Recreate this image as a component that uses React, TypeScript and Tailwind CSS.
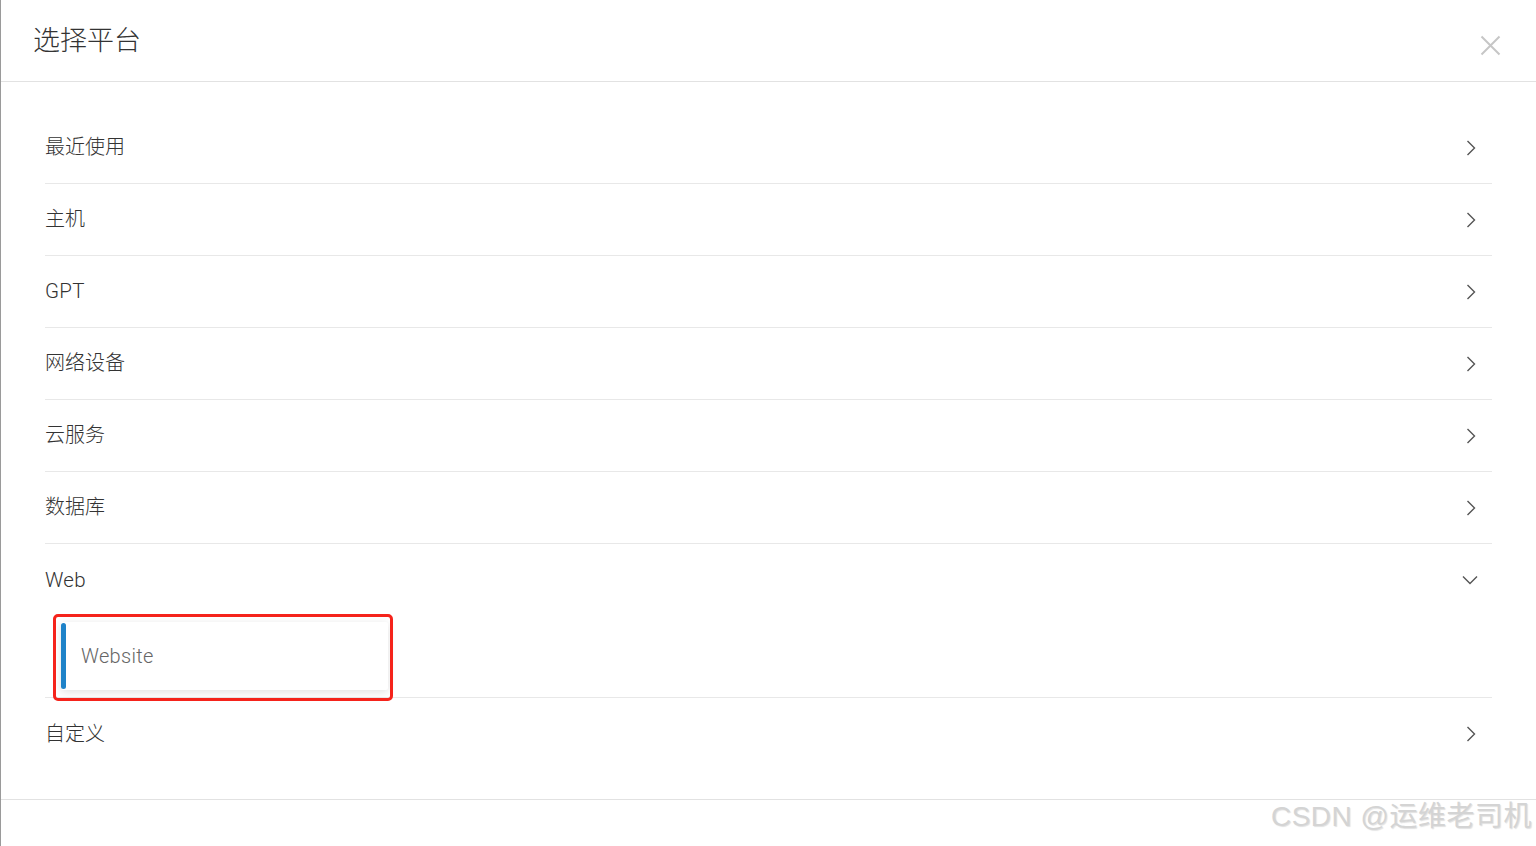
import React from "react";

const font = { fontFamily: '"Liberation Sans", "Noto Sans CJK SC", sans-serif' };
const latinFont = { fontFamily: 'Roboto, "Liberation Sans", sans-serif' };

function ChevronRight() {
  return (
    <svg width="12" height="18" viewBox="0 0 12 18" fill="none">
      <path d="M2.5 2 L9.5 9 L2.5 16" stroke="#555" strokeWidth="1.4" />
    </svg>
  );
}

function ChevronDown() {
  return (
    <svg width="18" height="12" viewBox="0 0 18 12" fill="none">
      <path d="M2 2.5 L9 9.5 L16 2.5" stroke="#555" strokeWidth="1.4" />
    </svg>
  );
}

function Row({ label, last, latin }: { label: string; last?: boolean; latin?: boolean }) {
  return (
    <div
      className={
        "h-[72px] flex items-center justify-between pr-[15px] text-[20px] text-[#333] " +
        (last ? "" : "border-b border-[#e8e8e8]")
      }
    >
      {latin ? (
        <span className="font-light text-[20.5px] tracking-[0.3px]" style={latinFont}>
          {label}
        </span>
      ) : (
        <span className="font-light -mt-[1px]">{label}</span>
      )}
      <ChevronRight />
    </div>
  );
}

export default function App() {
  return (
    <div
      className="w-[1536px] h-[846px] bg-white border-l border-[#9a9a9a] relative overflow-hidden flex flex-col"
      style={font}
    >
      <div className="h-[82px] shrink-0 border-b border-[#e2e2e2] flex justify-between">
        <div className="pl-[32px] flex items-center text-[27px] font-light text-[#333] pt-[1px]">选择平台</div>
        <div className="mt-[35px] mr-[35px]">
          <svg width="21" height="21" viewBox="0 0 21 21" fill="none">
            <path d="M1.5 1.5 L19.5 19.5 M19.5 1.5 L1.5 19.5" stroke="#c6c6c6" strokeWidth="2" />
          </svg>
        </div>
      </div>

      <div className="px-[44px] pt-[30px] pb-[29px] border-b border-[#e2e2e2]">
        <Row label="最近使用" />
        <Row label="主机" />
        <Row label="GPT" latin />
        <Row label="网络设备" />
        <Row label="云服务" />
        <Row label="数据库" />
        <div className="border-b border-[#e8e8e8]">
          <div className="h-[72px] flex items-center justify-between pr-[13px] text-[#333]">
            <span className="font-light text-[20.5px] tracking-[0.3px]" style={latinFont}>
              Web
            </span>
            <ChevronDown />
          </div>
          <div className="h-[81px] pt-[6px] pl-[16px]">
            <div className="w-[327px] h-[68px] bg-white flex items-center shadow-[0_2px_8px_rgba(0,0,0,0.12)] rounded-[2px]">
              <div className="w-[5px] h-[66px] bg-[#1f83c9] rounded-[3px]" />
              <span className="ml-[15px] text-[20px] font-light text-[#666] tracking-[0.3px]" style={latinFont}>
                Website
              </span>
            </div>
          </div>
        </div>
        <Row label="自定义" last />
      </div>

      <div className="flex-1" />

      <div className="absolute left-[52px] top-[614px] w-[340px] h-[87px] border-[3.5px] border-[#f5231b] rounded-[5px] pointer-events-none" />

      <div
        className="absolute right-[4px] bottom-[8px] text-[28px] text-[#d4d4d4] tracking-[0.5px]"
        style={{ textShadow: "1px 1px 1px rgba(0,0,0,0.12)" }}
      >
        CSDN @运维老司机
      </div>
    </div>
  );
}
